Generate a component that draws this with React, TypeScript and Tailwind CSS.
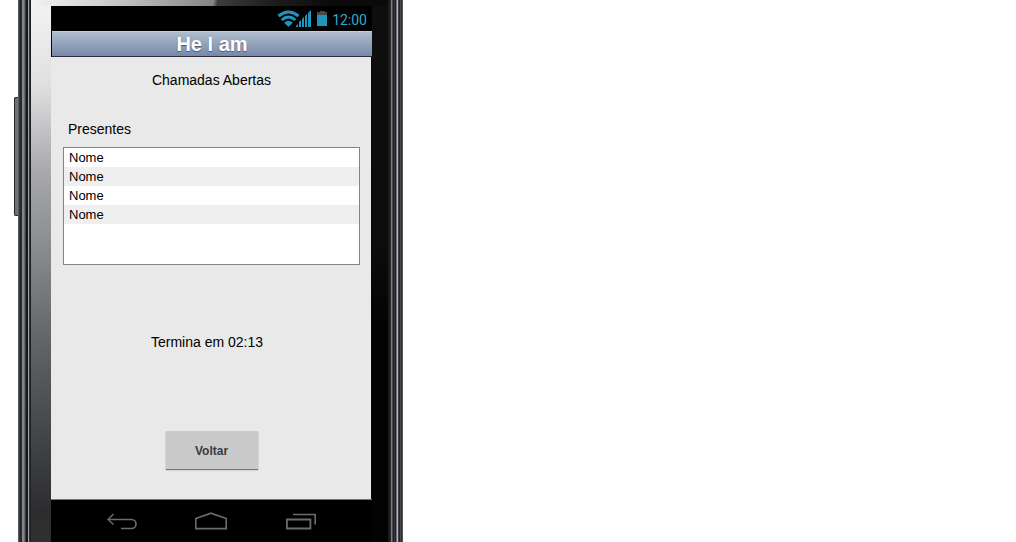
import React from "react";

const present = ["Nome", "Nome", "Nome", "Nome"];

function LeftRail() {
  return (
    <div className="flex w-[13px] shrink-0" aria-hidden="true">
      <div className="w-px bg-[#55595b]" />
      <div className="w-px bg-[#34373a]" />
      <div className="w-0.5 bg-[#27292c]" />
      <div className="w-0.5 bg-[#85858a]" />
      <div className="w-px bg-[#66676b]" />
      <div className="w-px bg-[#3b3d42]" />
      <div className="w-0.5 bg-[#14171c]" />
      <div className="w-px bg-[#a0a0a6]" />
      <div className="w-px bg-[#34373d]" />
      <div className="w-px bg-[#1c1f24]" />
    </div>
  );
}

function RightRail() {
  return (
    <div className="flex w-[15px] shrink-0" aria-hidden="true">
      <div className="w-0.5 bg-[#1b1b1b]" />
      <div className="w-px bg-[#2a2b2e]" />
      <div className="w-px bg-[#7d7d82]" />
      <div className="w-px bg-[#4a4b50]" />
      <div className="w-px bg-[#1e2024]" />
      <div className="w-px bg-[#3a3c41]" />
      <div className="w-px bg-[#1a1c20]" />
      <div className="w-px bg-[#74757a]" />
      <div className="w-px bg-[#b4b4ba]" />
      <div className="w-px bg-[#3f4146]" />
      <div className="w-px bg-[#222428]" />
      <div className="w-px bg-[#45484a]" />
      <div className="w-px bg-[#303335]" />
      <div className="w-px bg-[#505355]" />
    </div>
  );
}

function StatusBar() {
  return (
    <div className="ml-px flex h-[25px] items-center justify-end bg-black pt-px pr-[5px] text-[#33a8d0]">
      <svg width="36" height="18" viewBox="0 0 36 18" role="img" aria-label="Wi-Fi e sinal">
        <g fill="none" stroke="#2194bd" strokeWidth="3">
          <path d="M1.500 6 Q11.500 -2 21.500 6" />
          <path d="M4.700 10 Q11.500 4 18.300 10" />
        </g>
        <path d="M7.200 12.800 Q11.500 8.800 15.800 12.800 L11.500 17 Z" fill="#2194bd" />
        <g fill="#2194bd">
          <path d="M19 17v-1l2-2v3z" />
          <path d="M22 17v-5l2-2v7z" />
          <path d="M25 17V9l2-2v10z" />
          <path d="M28 17V6l2-2v13z" />
          <path d="M31 17V3l3-3v17z" />
        </g>
      </svg>
      <svg className="ml-1" width="10" height="16" viewBox="0 0 10 16" role="img" aria-label="Bateria">
        <path d="M3 0h5v1h2v3H0V1h3z" fill="#484848" />
        <path d="M0 4h10v11H0z" fill="#2194bd" />
      </svg>
      <span className="ml-[5px] pt-px font-['Roboto',sans-serif] text-[14px] leading-6">12:00</span>
    </div>
  );
}

function NavBar() {
  return (
    <nav className="flex flex-1 items-start border-t border-[#777] bg-black pt-3 pl-14 text-[#6c6c6c]">
      <button type="button" aria-label="Voltar uma tela" className="h-5 w-[30px]">
        <svg width="30" height="20" viewBox="0 0 30 20" fill="none" stroke="currentColor">
          <path d="M1 7.500h23.500a4.500 4.500 0 0 1 0 9H14" strokeWidth="1.700" />
          <path d="M6.500 2L1 7.500l5.500 5" strokeWidth="1.500" />
        </svg>
      </button>
      <button type="button" aria-label="Início" className="ml-[58px] h-5 w-8">
        <svg width="32" height="20" viewBox="0 0 32 20" fill="none" stroke="currentColor" strokeWidth="1.600">
          <path d="M.8 16.600V6.600L16 1.200l15.200 5.400v10z" />
        </svg>
      </button>
      <button type="button" aria-label="Aplicativos recentes" className="ml-[59px] h-5 w-[30px]">
        <svg width="30" height="20" viewBox="0 0 30 20" fill="none" stroke="currentColor">
          <path d="M.9 7.500h23.500v9H.9z" strokeWidth="1.800" />
          <path d="M7 2.500h22.200V12.500" strokeWidth="1.600" />
        </svg>
      </button>
    </nav>
  );
}

export default function App() {
  return (
    <div className="min-h-screen bg-white font-['Liberation_Sans',Arial,sans-serif] text-black">
      <div className="flex min-h-screen w-full max-w-[403px] pl-[14px]">
        <div
          aria-hidden="true"
          className="mt-[97px] h-[119px] w-1 shrink-0 rounded-l-xs border border-r-0 border-[#25282a] bg-[#6d7275]"
        />
        <LeftRail />
        <div className="flex min-w-0 flex-1 flex-col bg-[#080808]">
          <div
            aria-hidden="true"
            className="h-1.5 bg-[linear-gradient(100deg,#f3f3f3_0,#d0d0d0_70px,#858585_180px,#3d3d3d_184px,#1c1c1c_240px,#0a0a0a_300px)]"
          />
          <div className="flex flex-1">
            <div
              aria-hidden="true"
              className="w-5 shrink-0 bg-[linear-gradient(172deg,#f2f2f2_0%,#e0e0e0_15%,#a8a8ad_31%,#85888b_47%,#626668_62%,#484a4d_77%,#2d2d2f_94%,#303030_100%)]"
            />
            <div className="flex min-w-0 flex-1 flex-col">
              <StatusBar />
              <header className="ml-px h-[26px] border-t border-b border-t-[#c5ced8] border-b-[#302a3c] bg-linear-to-b from-[#b0bdcc] to-[#7589aa] text-center">
                <h1 className="text-[20px] leading-6 font-bold text-white [text-shadow:0_1px_1px_#4c5a70]">
                  He I am
                </h1>
              </header>
              <main className="mr-px h-[442px] bg-[#e9e9e9] pt-[11px] pr-[11px] pl-3 text-[14px]">
                <h2 className="text-center leading-6">Chamadas Abertas</h2>
                <h3 id="present-label" className="mt-[25px] pl-[5px] leading-6">
                  Presentes
                </h3>
                <ul
                  aria-labelledby="present-label"
                  className="mt-1.5 h-[118px] border border-[#82838f] bg-white text-[13px] leading-[19px]"
                >
                  {present.map((name, i) => (
                    <li key={i} className="pl-[5px] even:bg-[#efefef]">
                      {name}
                    </li>
                  ))}
                </ul>
                <p className="mt-[65px] pl-[88px] leading-6">Termina em 02:13</p>
                <div className="mt-[77px] flex justify-center">
                  <button
                    type="button"
                    className="h-[38px] w-[92px] bg-[#c9c9c9] pt-px text-[12px] font-bold text-[#3a3a3f] shadow-[0_1px_1px_#777]"
                  >
                    Voltar
                  </button>
                </div>
              </main>
              <NavBar />
            </div>
            <div aria-hidden="true" className="w-4 shrink-0 bg-[linear-gradient(#0e0e0e,#0c0c0c_45%,#030303_60%)]" />
          </div>
        </div>
        <RightRail />
      </div>
    </div>
  );
}
